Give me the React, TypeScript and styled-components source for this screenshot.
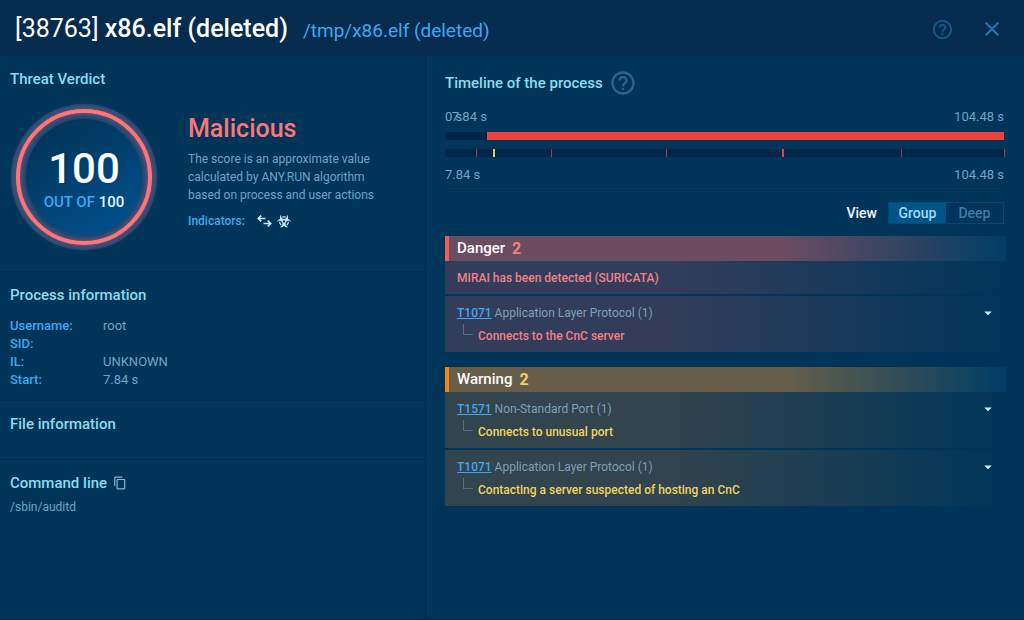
import React, { useState } from 'react';
import styled, { createGlobalStyle } from 'styled-components';
import { MdHelpOutline, MdContentCopy, MdArrowDropDown } from 'react-icons/md';
import { FaBiohazard } from 'react-icons/fa';

const GlobalStyle = createGlobalStyle`
  *, *::before, *::after { box-sizing: border-box; }
  body {
    margin: 0;
    background: #003559;
    font-family: Roboto, "Liberation Sans", sans-serif;
    font-size: 12px;
    line-height: 18px;
    color: #6fa3c4;
  }
  h1, h2, h3, p, ul, dl, dd { margin: 0; padding: 0; }
  ul { list-style: none; }
  button { font-family: inherit; margin: 0; padding: 0; border: 0; background: none; cursor: pointer; }
`;

const Page = styled.div`
  display: flex;
  flex-direction: column;
  min-height: 100vh;
  border-bottom: 1px solid #002546;
`;

const Header = styled.header`
  display: flex;
  align-items: center;
  min-height: 56px;
  padding: 2px 25px 0 15px;
  background: #052b4e;
`;

const Title = styled.h1`
  font-size: 25px;
  line-height: 32px;
  font-weight: 500;
  color: #fff;
`;

const Pid = styled.span`
  font-weight: 400;
`;

const Path = styled.span`
  flex: 1;
  margin-left: 15px;
  padding-top: 4px;
  font-size: 19px;
  line-height: 24px;
  color: #3ba9f2;
`;

const IconButton = styled.button<{ $color: string }>`
  display: flex;
  align-items: center;
  justify-content: center;
  color: ${(p) => p.$color};
`;

const HeaderActions = styled.div`
  display: flex;
  align-items: center;
  gap: 31px;
`;

const Body = styled.div`
  flex: 1;
  display: grid;
  grid-template-columns: minmax(0, 426fr) minmax(0, 598fr);
`;

const Side = styled.aside`
  border-right: 1px solid #00284a;
`;

const Section = styled.section`
  padding: 15px 10px 11px;
  & + & { border-top: 1px solid #00284a; }
`;

const Heading = styled.h2`
  font-size: 15px;
  line-height: 16px;
  font-weight: 500;
  color: #8bdcec;
`;

const Verdict = styled.div`
  display: flex;
  gap: 31px;
  margin: 17px 0 10px 1px;
`;

const Halo = styled.div`
  flex: none;
  display: flex;
  width: 146px;
  height: 146px;
  padding: 5px;
  border-radius: 50%;
  background: #2c4b75;
  box-shadow: 0 0 3px #1d4269;
`;

const Ring = styled.div`
  flex: 1;
  display: flex;
  padding: 6px;
  border: 4px solid #ff7575;
  border-radius: 50%;
  background: #2c4b75;
  box-shadow: 0 0 5px rgba(255, 117, 117, 0.35), inset 0 0 5px rgba(255, 117, 117, 0.35);
`;

const Core = styled.div`
  flex: 1;
  display: flex;
  flex-direction: column;
  align-items: center;
  padding-top: 29px;
  border-radius: 50%;
  background: linear-gradient(150deg, #00365d 20%, #00508c 90%);
  box-shadow: 0 0 4px #0a3d68;
`;

const Score = styled.span`
  font-size: 42px;
  line-height: 42px;
  font-weight: 500;
  color: #fff;
`;

const OutOf = styled.span`
  font-size: 15px;
  line-height: 24px;
  font-weight: 500;
  color: #3ba9f2;
  b { font-weight: 500; color: #e8f4ff; }
`;

const VerdictText = styled.div`
  padding-top: 9px;
`;

const VerdictName = styled.h3`
  font-size: 25px;
  line-height: 32px;
  font-weight: 500;
  color: #ff7575;
`;

const Note = styled.p`
  max-width: 196px;
  margin: 5px 0 8px;
`;

const Label = styled.span`
  font-weight: 500;
  color: #3ba9f2;
`;

const Indicators = styled.div`
  display: flex;
  align-items: center;
  gap: 5px;
  color: #c5e8f7;
  ${Label} { margin-right: 7px; }
`;

const Facts = styled.dl`
  display: grid;
  grid-template-columns: 93px 1fr;
  grid-auto-rows: 18px;
  margin-top: 14px;
  font-size: 13px;
  dt { font-weight: 500; color: #3ba9f2; }
`;

const FileSpace = styled.div`
  height: 16px;
`;

const HeadingRow = styled.div`
  display: flex;
  align-items: center;
  gap: 6px;
  height: 16px;
`;

const Command = styled.p`
  margin-top: 7px;
`;

const Main = styled.main`
  padding: 14px 18px 16px 19px;
`;

const TimelineTitle = styled.div`
  display: flex;
  align-items: center;
  gap: 6px;
  height: 26px;
  margin-bottom: 12px;
`;

const Chart = styled.div`
  margin-right: 2px;
  border-bottom: 1px solid #002c4f;
`;

const Scale = styled.div`
  position: relative;
  display: flex;
  justify-content: space-between;
  padding-bottom: 6px;
  font-size: 13px;
`;

const StartMark = styled.span`
  position: absolute;
  white-space: nowrap;
  transform: translateX(-100%);
`;

const Track = styled.div`
  position: relative;
  height: 8px;
  margin-bottom: 9px;
  background: #00274a;
`;

const Span = styled.div`
  height: 100%;
  margin-left: auto;
  background: #e84340;
`;

const Tick = styled.i<{ $color: string; $strong?: boolean }>`
  position: absolute;
  top: 0;
  width: ${(p) => (p.$strong ? 2 : 1)}px;
  height: 100%;
  background: ${(p) => p.$color};
`;

const ViewRow = styled.div`
  display: flex;
  align-items: center;
  justify-content: flex-end;
  gap: 11px;
  margin: 11px 2px 12px 0;
  font-size: 14px;
  font-weight: 500;
  color: #f2f8fc;
`;

const Toggle = styled.div`
  display: flex;
  border: 1px solid #004a78;
`;

const ToggleButton = styled.button<{ $active: boolean }>`
  width: 57px;
  height: 20px;
  font-size: 14px;
  font-weight: 500;
  color: ${(p) => (p.$active ? '#9fdcf8' : '#3f7ba2')};
  background: ${(p) => (p.$active ? '#00548a' : 'transparent')};
`;

type Tone = 'danger' | 'warning';
const tones = {
  danger: { edge: '#ee5c5c', head: '#6b4c60', tail: '#003d64', row: '#323d5b', text: '#f08085' },
  warning: { edge: '#f58414', head: '#675e4a', tail: '#003d64', row: '#32444d', text: '#f0d264' },
};

const Group = styled.section`
  & + & { margin-top: 15px; }
`;

const GroupHead = styled.h3<{ $tone: Tone }>`
  display: flex;
  gap: 7px;
  padding-left: 8px;
  border-left: 4px solid ${(p) => tones[p.$tone].edge};
  background: linear-gradient(90deg, ${(p) => tones[p.$tone].head} 60%, ${(p) => tones[p.$tone].tail});
  font-size: 15px;
  line-height: 25px;
  font-weight: 500;
  color: #fff;
`;

const Count = styled.span<{ $tone: Tone }>`
  font-size: 16px;
  font-weight: 700;
  color: ${(p) => tones[p.$tone].text};
`;

const Item = styled.li<{ $tone: Tone }>`
  padding: 8px 9px 7px 12px;
  background: linear-gradient(90deg, ${(p) => tones[p.$tone].row} 40%, #003559);
  & + & { margin-top: 2px; }
`;

const Technique = styled.div`
  display: flex;
  justify-content: space-between;
  height: 18px;
  color: #7ba0b8;
`;

const TechniqueLink = styled.a`
  font-weight: 500;
  color: #3ba9f2;
  text-decoration: underline;
`;

const Finding = styled.p<{ $tone: Tone }>`
  font-weight: 500;
  color: ${(p) => tones[p.$tone].text};
`;

const Nested = styled.div`
  display: flex;
  gap: 5px;
  margin-top: 5px;
  padding-left: 6px;
`;

const Elbow = styled.span`
  width: 10px;
  height: 11px;
  margin-top: -3px;
  border-left: 1px solid #55707f;
  border-bottom: 1px solid #55707f;
`;

const TransferIcon = () => (
  <svg width="15" height="12" viewBox="0 0 15 12" fill="none" stroke="currentColor" strokeWidth="1.7" aria-hidden="true">
    <path d="M8.5 3.5H1.5M4.2.6L1.3 3.5l2.9 2.9" />
    <path d="M6.5 8.5h7M10.8 5.6l2.9 2.9-2.9 2.9" />
  </svg>
);

const CloseIcon = () => (
  <svg width="14" height="14" viewBox="0 0 14 14" fill="none" stroke="currentColor" strokeWidth="2" aria-hidden="true">
    <path d="M.7.7l12.6 12.6M13.3.7L.7 13.3" />
  </svg>
);

const facts = [
  ['Username:', 'root'],
  ['SID:', ''],
  ['IL:', 'UNKNOWN'],
  ['Start:', '7.84 s'],
];

const total = 104.48;
const start = 7.84;

const ticks = [
  { at: 5.6, color: '#a83a48' },
  { at: 8.6, color: '#d8cf55', strong: true },
  { at: 18.9, color: '#a83a48' },
  { at: 39.6, color: '#a83a48' },
  { at: 60.3, color: '#e84340', strong: true },
  { at: 81.5, color: '#8a3a50' },
  { at: 100, color: '#a83a48' },
];

const groups: { tone: Tone; name: string; items: { id?: string; technique?: string; text: string }[]; count: number }[] = [
  {
    tone: 'danger',
    name: 'Danger',
    count: 2,
    items: [
      { text: 'MIRAI has been detected (SURICATA)' },
      { id: 'T1071', technique: 'Application Layer Protocol (1)', text: 'Connects to the CnC server' },
    ],
  },
  {
    tone: 'warning',
    name: 'Warning',
    count: 2,
    items: [
      { id: 'T1571', technique: 'Non-Standard Port (1)', text: 'Connects to unusual port' },
      { id: 'T1071', technique: 'Application Layer Protocol (1)', text: 'Contacting a server suspected of hosting an CnC' },
    ],
  },
];

export default function App() {
  const [view, setView] = useState('Group');
  return (
    <Page>
      <GlobalStyle />
      <Header>
        <Title>
          <Pid>[38763]</Pid> x86.elf (deleted)
        </Title>
        <Path>/tmp/x86.elf (deleted)</Path>
        <HeaderActions>
          <IconButton $color="#195984" aria-label="Help">
            <MdHelpOutline size={23} />
          </IconButton>
          <IconButton $color="#2576ad" aria-label="Close">
            <CloseIcon />
          </IconButton>
        </HeaderActions>
      </Header>
      <Body>
        <Side>
          <Section>
            <Heading>Threat Verdict</Heading>
            <Verdict>
              <Halo>
                <Ring>
                  <Core>
                    <Score>100</Score>
                    <OutOf>
                      OUT OF <b>100</b>
                    </OutOf>
                  </Core>
                </Ring>
              </Halo>
              <VerdictText>
                <VerdictName>Malicious</VerdictName>
                <Note>The score is an approximate value calculated by ANY.RUN algorithm based on process and user actions</Note>
                <Indicators>
                  <Label>Indicators:</Label>
                  <TransferIcon />
                  <FaBiohazard size={14} />
                </Indicators>
              </VerdictText>
            </Verdict>
          </Section>
          <Section>
            <Heading>Process information</Heading>
            <Facts>
              {facts.map(([name, value]) => (
                <React.Fragment key={name}>
                  <dt>{name}</dt>
                  <dd>{value}</dd>
                </React.Fragment>
              ))}
            </Facts>
          </Section>
          <Section>
            <Heading>File information</Heading>
            <FileSpace />
          </Section>
          <Section>
            <HeadingRow>
              <Heading>Command line</Heading>
              <IconButton $color="#79bcd3" aria-label="Copy command line">
                <MdContentCopy size={14} />
              </IconButton>
            </HeadingRow>
            <Command>/sbin/auditd</Command>
          </Section>
        </Side>
        <Main>
          <TimelineTitle>
            <Heading>Timeline of the process</Heading>
            <IconButton $color="#2b6488" aria-label="About the timeline">
              <MdHelpOutline size={28} />
            </IconButton>
          </TimelineTitle>
          <Chart>
            <Scale>
              <span>0 s</span>
              <StartMark style={{ left: `${(start / total) * 100}%` }}>{start} s</StartMark>
              <span>{total} s</span>
            </Scale>
            <Track>
              <Span style={{ width: `${100 - (start / total) * 100}%` }} />
            </Track>
            <Track>
              {ticks.map((t) => (
                <Tick key={t.at} $color={t.color} $strong={t.strong} style={{ left: `${t.at}%` }} />
              ))}
            </Track>
            <Scale>
              <span>{start} s</span>
              <span>{total} s</span>
            </Scale>
          </Chart>
          <ViewRow>
            <span>View</span>
            <Toggle>
              {['Group', 'Deep'].map((v) => (
                <ToggleButton key={v} $active={view === v} onClick={() => setView(v)}>
                  {v}
                </ToggleButton>
              ))}
            </Toggle>
          </ViewRow>
          {groups.map((g) => (
            <Group key={g.name}>
              <GroupHead $tone={g.tone}>
                {g.name} <Count $tone={g.tone}>{g.count}</Count>
              </GroupHead>
              <ul>
                {g.items.map((item) => (
                  <Item key={item.text} $tone={g.tone}>
                    {item.id ? (
                      <>
                        <Technique>
                          <span>
                            <TechniqueLink href={`#${item.id}`}>{item.id}</TechniqueLink> {item.technique}
                          </span>
                          <IconButton $color="#d5effa" aria-label="Expand">
                            <MdArrowDropDown size={18} />
                          </IconButton>
                        </Technique>
                        <Nested>
                          <Elbow />
                          <Finding $tone={g.tone}>{item.text}</Finding>
                        </Nested>
                      </>
                    ) : (
                      <Finding $tone={g.tone}>{item.text}</Finding>
                    )}
                  </Item>
                ))}
              </ul>
            </Group>
          ))}
        </Main>
      </Body>
    </Page>
  );
}
